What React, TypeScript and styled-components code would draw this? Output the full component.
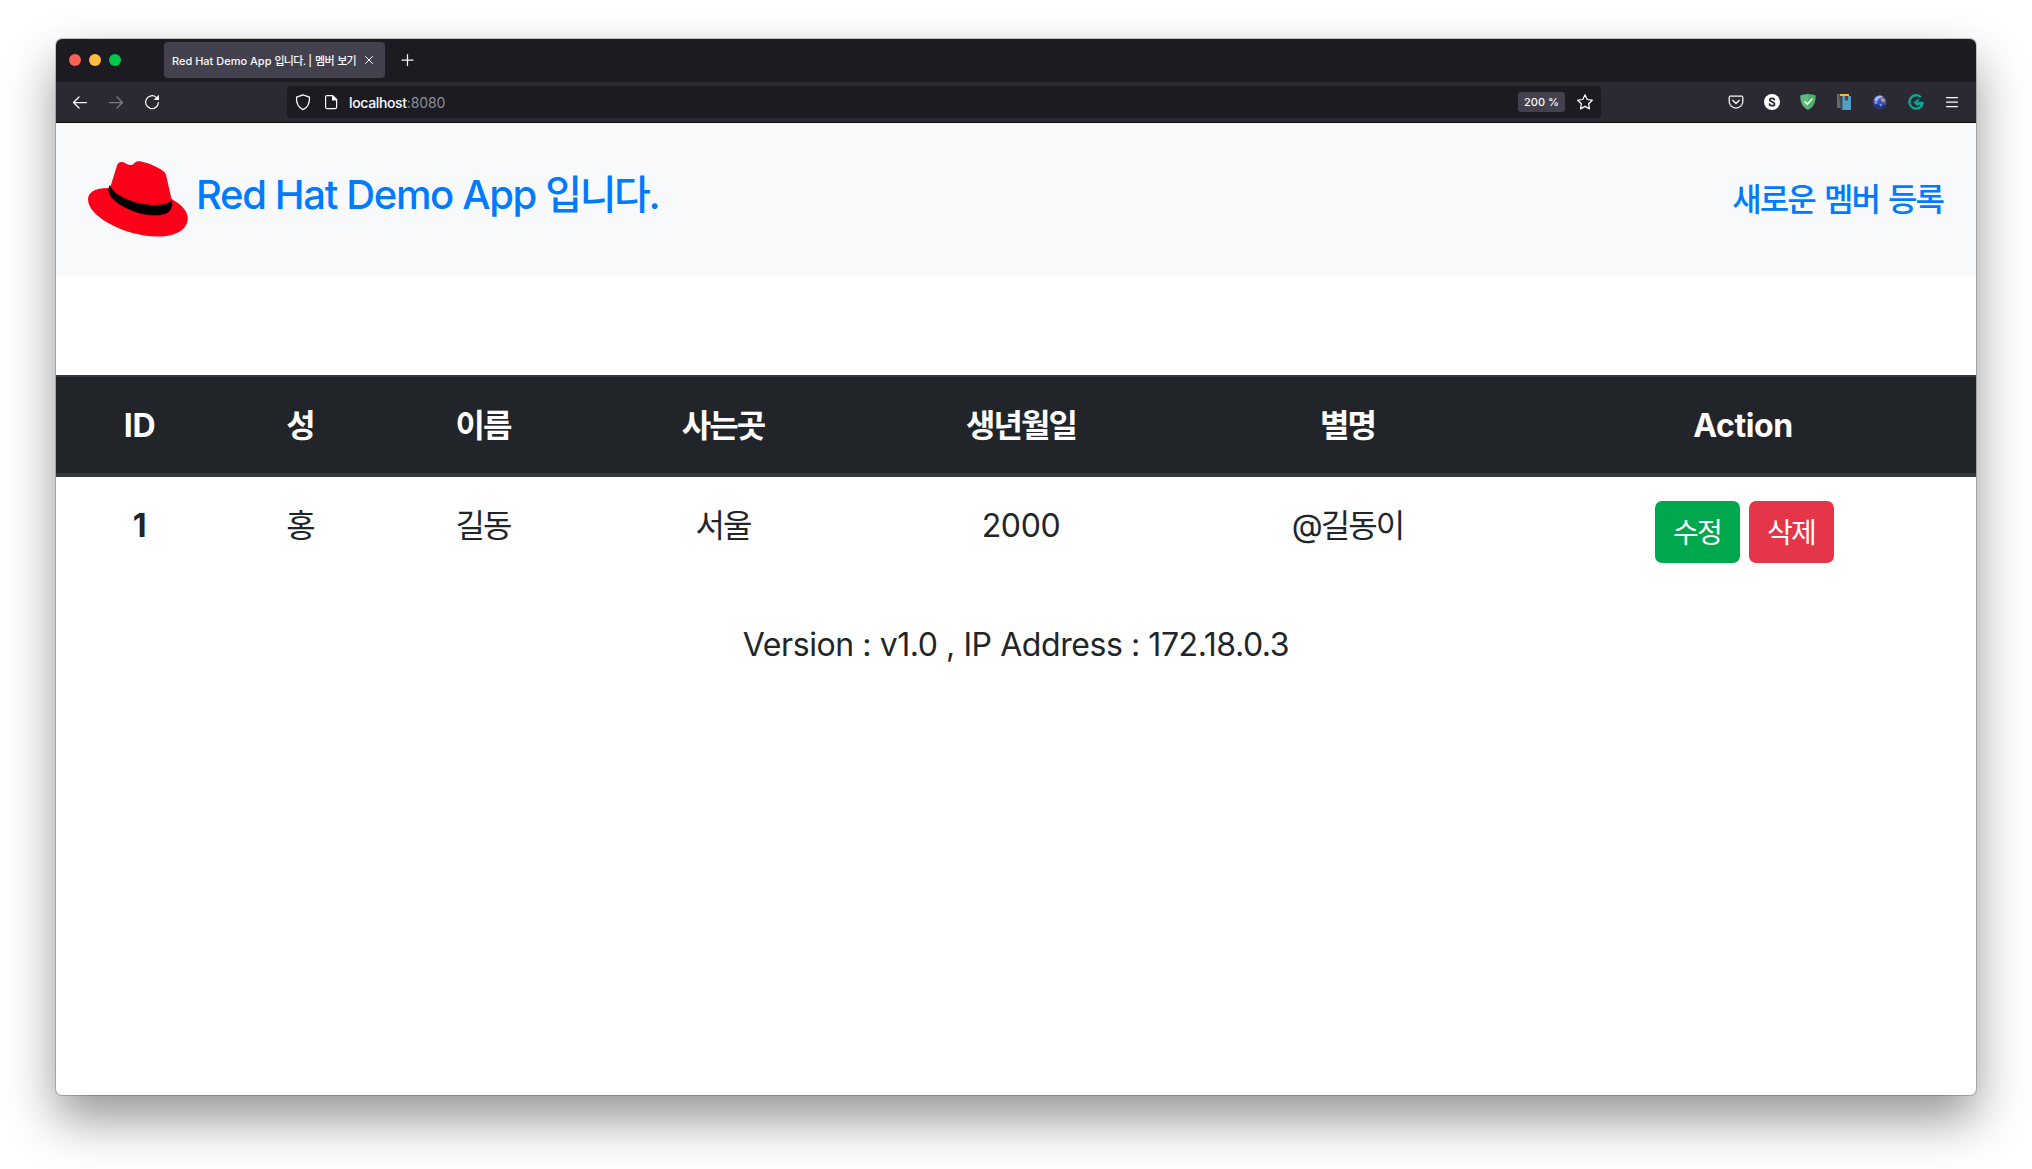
import React from 'react';
import styled, { createGlobalStyle } from 'styled-components';

const sans = `Inter, 'Noto Sans CJK KR', sans-serif`;

const GlobalStyle = createGlobalStyle`
  * { box-sizing: border-box; }
  body { margin: 0; background: #fff; font-family: ${sans}; color: #212529; overflow: hidden; }
`;

const Desktop = styled.div`
  height: 1169px;
  padding: 39px 56px 74px;
`;

const Window = styled.div`
  display: flex;
  flex-direction: column;
  height: 1056px;
  border-radius: 6px;
  background: #fff;
  box-shadow: 0 0 0 1px rgba(0, 0, 0, 0.2), 0 24px 50px rgba(0, 0, 0, 0.42);
  overflow: hidden;
`;

const TabBar = styled.div`
  display: flex;
  align-items: center;
  flex: none;
  height: 43px;
  padding: 0 0 1px 13px;
  background: #1c1b22;
  color: #fbfbfe;
`;

const Lights = styled.div`
  display: flex;
  gap: 8px;
  width: 95px;
`;

const Light = styled.span<{ $color: string }>`
  width: 12px;
  height: 12px;
  border-radius: 50%;
  background: ${(p) => p.$color};
`;

const Tab = styled.div`
  display: flex;
  align-items: center;
  justify-content: space-between;
  width: 221px;
  height: 36px;
  padding: 0 11px 0 8px;
  border-radius: 4px;
  background: #42414d;
`;

const TabTitle = styled.span`
  font-size: 11px;
  font-weight: 500;
  white-space: nowrap;
`;

const NewTab = styled.div`
  display: flex;
  margin-left: 16px;
`;

const Toolbar = styled.div`
  display: flex;
  align-items: center;
  flex: none;
  height: 41px;
  padding: 0 16px;
  border-bottom: 1px solid #0c0c0d;
  background: #2b2a33;
  color: #fbfbfe;
`;

const NavButtons = styled.div`
  display: flex;
  gap: 20px;
  width: 215px;
`;

const UrlBar = styled.div`
  display: flex;
  align-items: center;
  width: 1314px;
  height: 32px;
  padding: 0 8px;
  border-radius: 4px;
  background: #1c1b22;
`;

const UrlIcons = styled.div`
  display: flex;
  gap: 12px;
  margin-right: 10px;
`;

const Url = styled.span`
  flex: 1;
  padding-top: 1px;
  font-size: 14px;
  font-weight: 500;
  letter-spacing: -0.35px;
`;

const Port = styled.span`
  color: #8f8f98;
  font-weight: 400;
  letter-spacing: -0.1px;
`;

const Zoom = styled.span`
  width: 47px;
  margin-right: 12px;
  border-radius: 3px;
  background: #42414d;
  font-size: 11px;
  font-weight: 500;
  line-height: 20px;
  text-align: center;
`;

const Extensions = styled.div`
  display: flex;
  gap: 20px;
  margin-left: auto;
`;

const Glyph = styled.svg<{ $dim?: boolean; $size?: number }>`
  display: block;
  flex: none;
  width: ${(p) => p.$size ?? 16}px;
  height: ${(p) => p.$size ?? 16}px;
  overflow: visible;
  fill: none;
  stroke: currentColor;
  stroke-width: 1.25;
  stroke-linecap: round;
  stroke-linejoin: round;
  opacity: ${(p) => (p.$dim ? 0.4 : 1)};
`;

const Header = styled.header`
  display: flex;
  align-items: center;
  justify-content: space-between;
  height: 152px;
  padding: 0 33px 0 32px;
  background: #f8f9fa;
`;

const Brand = styled.a`
  display: flex;
  align-items: center;
  color: #007bff;
  font-size: 40px;
  font-weight: 500;
  line-height: 48px;
  white-space: nowrap;
`;

const BrandText = styled.span`
  margin: -8px 0 0 8px;
  letter-spacing: -1.35px;
`;

const Hat = styled.svg`
  width: 100px;
  height: 76px;
`;

const Ko = styled.span`
  letter-spacing: -0.06em;
  word-spacing: 0.075em;
`;

const NewMember = styled.a`
  padding-top: 2px;
  color: #007bff;
  font-size: 32px;
  font-weight: 500;
  line-height: 48px;
`;

const Members = styled.table`
  width: 1920px;
  margin-top: 100px;
  border-collapse: separate;
  border-spacing: 0;
  table-layout: fixed;
  font-size: 32px;
  line-height: 48px;
  letter-spacing: -0.4px;
  text-align: center;
`;

const Col = styled.col<{ $w: number }>`
  width: ${(p) => p.$w}px;
`;

const HeadCell = styled.th`
  height: 102px;
  padding: 2px 0 0;
  border-top: 2px solid #32383e;
  border-bottom: 4px solid #32383e;
  background: #212529;
  color: #fff;
  font-weight: 700;
`;

const Cell = styled.td<{ $bold?: boolean; $top: number }>`
  height: 110px;
  padding: ${(p) => p.$top}px 0 0;
  font-weight: ${(p) => (p.$bold ? 700 : 400)};
  vertical-align: top;
`;

const Actions = styled.div`
  display: flex;
  justify-content: center;
  gap: 9px;
  padding-left: 2px;
`;

const Button = styled.button<{ $color: string }>`
  width: 85px;
  height: 62px;
  padding: 2px 0 0;
  border: 0;
  border-radius: 7px;
  background: ${(p) => p.$color};
  color: #fff;
  font-family: ${sans};
  font-size: 28px;
  line-height: 42px;
`;

const Version = styled.p`
  margin: 34px 0 0;
  font-size: 32px;
  line-height: 48px;
  letter-spacing: -0.43px;
  text-align: center;
`;

const columns = [
  { label: 'ID', value: '1', width: 167 },
  { label: '성', value: '홍', width: 154 },
  { label: '이름', value: '길동', width: 212 },
  { label: '사는곳', value: '서울', width: 268 },
  { label: '생년월일', value: '2000', width: 328 },
  { label: '별명', value: '@길동이', width: 325 },
  { label: 'Action', value: '', width: 466 },
];

const isKorean = (s: string) => /[가-힣]/.test(s);
const Label = ({ text }: { text: string }) => (isKorean(text) ? <Ko>{text}</Ko> : <>{text}</>);

export default function App() {
  return (
    <>
      <GlobalStyle />
      <Desktop>
        <Window>
          <TabBar>
            <Lights>
              <Light $color="#ff5f57" />
              <Light $color="#febc40" />
              <Light $color="#00ca4e" />
            </Lights>
            <Tab>
              <TabTitle>
                Red Hat Demo App <Ko>입니다.</Ko> | <Ko>멤버 보기</Ko>
              </TabTitle>
              <Glyph $size={10} viewBox="0 0 10 10">
                <path strokeWidth="1" d="M1.5 1.5l7 7M8.5 1.5l-7 7" />
              </Glyph>
            </Tab>
            <NewTab>
              <Glyph viewBox="0 0 16 16">
                <path d="M6.5 2.5v11M1 8h11" />
              </Glyph>
            </NewTab>
          </TabBar>
          <Toolbar>
            <NavButtons>
              <Glyph viewBox="0 0 16 16">
                <path d="M14.5 8.5h-13M7 3L1.5 8.5L7 14" />
              </Glyph>
              <Glyph $dim viewBox="0 0 16 16">
                <path d="M1.5 8.5h13M9 3l5.500 5.500L9 14" />
              </Glyph>
              <Glyph viewBox="0 0 16 16">
                <path d="M12.300 3.400A6.400 6.400 0 1 0 14.400 8.600" />
                <path fill="currentColor" stroke="none" d="M15 .8v5.300h-5.500z" />
              </Glyph>
            </NavButtons>
            <UrlBar>
              <UrlIcons>
                <Glyph viewBox="0 0 16 16">
                  <path d="M8 .9L1.500 3.200C1.300 8.400 2.700 13.300 8 15.600C13.300 13.300 14.700 8.400 14.500 3.200z" />
                </Glyph>
                <Glyph viewBox="0 0 16 16">
                  <path d="M9.500 1.500H4a1.400 1.400 0 0 0-1.400 1.400v10.200a1.400 1.400 0 0 0 1.400 1.400h8.200a1.400 1.400 0 0 0 1.400-1.400V5.500z" />
                  <path fill="currentColor" stroke="none" d="M9 1.500V6.500h5z" />
                </Glyph>
              </UrlIcons>
              <Url>
                localhost<Port>:8080</Port>
              </Url>
              <Zoom>200 %</Zoom>
              <Glyph viewBox="0 0 16 16">
                <path d="M8 .8l2.200 4.700 5.100.7-3.700 3.500.9 5.200L8 12.400l-4.500 2.500.9-5.200L.7 6.200l5.100-.7z" />
              </Glyph>
            </UrlBar>
            <Extensions>
              <Glyph viewBox="0 0 16 16">
                <path d="M2.400 2.200h11.200a1.200 1.200 0 0 1 1.200 1.200V7.500a6.800 6.500 0 0 1-13.600 0V3.400a1.200 1.200 0 0 1 1.200-1.200zM4.700 6.300L8 9.500l3.300-3.200" />
              </Glyph>
              <Glyph viewBox="0 0 16 16">
                <circle cx="8" cy="8" r="8" fill="#fff" stroke="none" />
                <path stroke="#2b2a33" strokeWidth="1.8" d="M10.400 5.700C9.800 3.800 5.800 4 5.800 6.100C5.800 8.400 10.500 7.400 10.500 9.900C10.500 12.200 6 12.300 5.500 10.200" />
              </Glyph>
              <Glyph viewBox="0 0 16 16">
                <path fill="#5dba79" stroke="none" d="M8 0C5 0 2 .8.3 1.500C.2 8 2.300 13.300 8 16z" />
                <path fill="#4db06b" stroke="none" d="M8 0c3 0 6 .8 7.700 1.500C15.800 8 13.700 13.300 8 16z" />
                <path stroke="#fff" strokeWidth="1.500" d="M5 7.800l2.300 2.500L12 5" />
              </Glyph>
              <Glyph viewBox="0 0 16 16">
                <g stroke="none">
                  <path fill="#6b6868" d="M1 0h4v14H1z" />
                  <path fill="#3e4651" d="M3 1h4v15H5z" />
                  <path fill="#4f9fc6" d="M6.500 2H15v14H6.500z" />
                  <path fill="#f5b82e" d="M4 0h9v2H4z" />
                  <path fill="#b3171c" d="M9 2h3v5l-1.500-1.200L9 7z" />
                </g>
              </Glyph>
              <Glyph viewBox="0 0 16 16">
                <g stroke="none">
                  <circle cx="7.700" cy="8" r="6.700" fill="#3a50bd" />
                  <path fill="#a9b9de" d="M2.500 5C4 1.500 8.500 .5 11 2.500L8.500 4.200l-2 .6-1 2.400-2.500.3z" />
                  <path fill="#c2a06d" d="M9 4.200l3 .3 1.300 2.500-2 1.200-2.300-1.700z" />
                  <path fill="#232c7d" d="M2 10.500l3.500-.5 2.500 2.500 4-2 1.500.5c-2.500 4-8.500 4.500-11.500-.5z" />
                  <path fill="#86a4ea" d="M2 7.500l3.500.7-1.500 2.300zM8 10l2.500.7-2 2z" />
                </g>
              </Glyph>
              <Glyph viewBox="0 0 16 16">
                <path stroke="#06a896" strokeWidth="2.400" strokeLinecap="butt" d="M13 3.300A6.700 6.700 0 1 0 14.700 9H8.300" />
                <path stroke="#06a896" strokeWidth="1.800" strokeLinecap="butt" strokeLinejoin="miter" d="M10.800 5.600L6.800 8.500l3.500 3M11 9l3.500 3" />
              </Glyph>
              <Glyph viewBox="0 0 16 16">
                <path d="M2.500 3.500h11M2.500 8h11M2.500 12.500h11" />
              </Glyph>
            </Extensions>
          </Toolbar>
          <Header>
            <Brand>
              <Hat viewBox="0 0 100 76">
                <path
                  fill="#fc0019"
                  d="M22 27L29 4.500C30.500 .5 34 .2 37.500 2.200C41 4.200 43.500 5 46 2.500C49 -.8 52 0 58 1.800C64 3.600 70 6.500 74.500 9.500C77 11.200 78 13 78.500 16L83.500 38C93 43 100 50 99.800 57.500C99.500 68 89 75.500 70 75.500C38 75.500 0 56 0 38.500C0 31 8 26.500 22 27z"
                />
                <path d="M22 23.700C24 34 48 44.500 68 44C77 43.700 84 42 83.300 37C85 43 84.500 47 81 50.500C76 55.500 62 55.500 49 51.500C33 46.500 15 34.500 22 23.700z" />
              </Hat>
              <BrandText>
                Red Hat Demo App <Ko>입니다.</Ko>
              </BrandText>
            </Brand>
            <NewMember>
              <Ko>새로운 멤버 등록</Ko>
            </NewMember>
          </Header>
          <Members>
            <colgroup>
              {columns.map((c) => (
                <Col key={c.label} $w={c.width} />
              ))}
            </colgroup>
            <thead>
              <tr>
                {columns.map((c) => (
                  <HeadCell key={c.label}>
                    <Label text={c.label} />
                  </HeadCell>
                ))}
              </tr>
            </thead>
            <tbody>
              <tr>
                {columns.map((c, i) => (
                  <Cell key={c.label} $bold={i === 0} $top={c.value ? 25 : 24}>
                    {c.value ? (
                      <Label text={c.value} />
                    ) : (
                      <Actions>
                        <Button $color="#00a84d">
                          <Ko>수정</Ko>
                        </Button>
                        <Button $color="#e53649">
                          <Ko>삭제</Ko>
                        </Button>
                      </Actions>
                    )}
                  </Cell>
                ))}
              </tr>
            </tbody>
          </Members>
          <Version>Version : v1.0 , IP Address : 172.18.0.3</Version>
        </Window>
      </Desktop>
    </>
  );
}
